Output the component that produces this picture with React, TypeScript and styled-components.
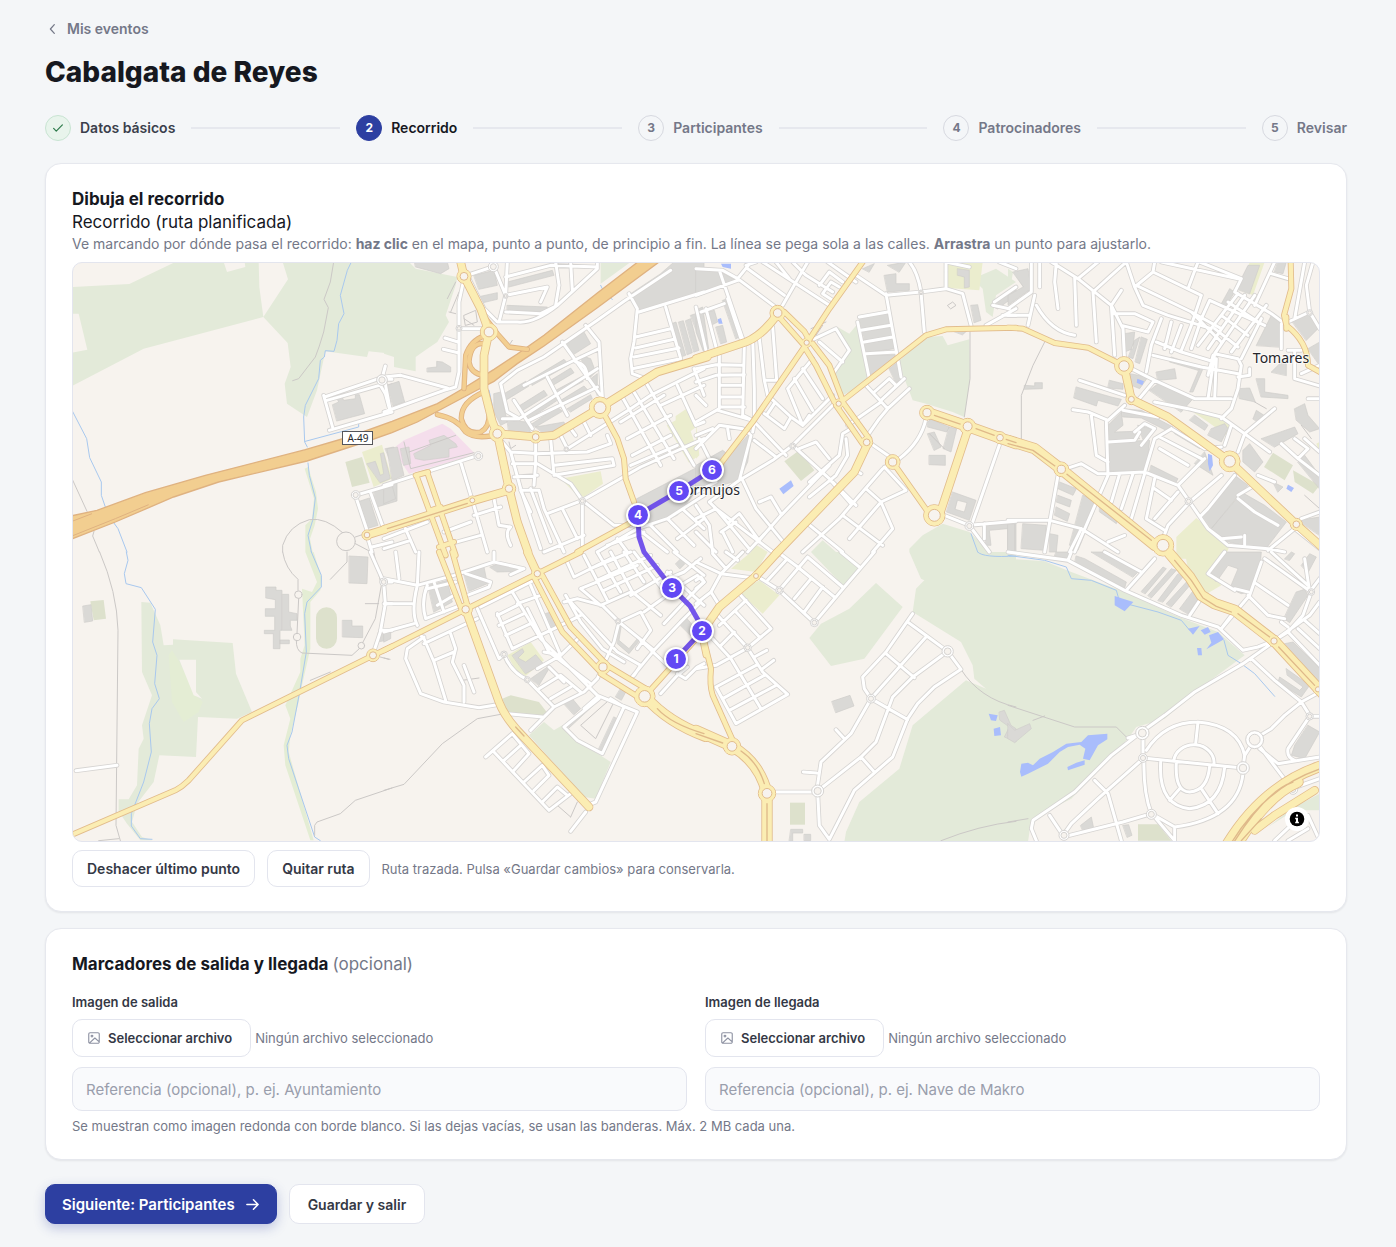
import React from "react";
import styled, { createGlobalStyle, css } from "styled-components";

const Global = createGlobalStyle`
  *, *::before, *::after { box-sizing: border-box; }
  body { margin: 0; background: #f4f6f8; color: #16181f; font-family: Inter, "Noto Sans", sans-serif; font-size: 16px; }
  button, input { font-family: inherit; }
  h1, h2, p { margin: 0; }
`;

/* ---------- Map data: each sheet is drawn at three times the screen scale ---------- */

type Kind = "green" | "meadow" | "park" | "pitch" | "pink" | "building" | "water" | "stream" | "track" | "street" | "ramp" | "avenue" | "slim" | "wide" | "median";
type Sheet = {
  x: number;
  y: number;
  paths: Partial<Record<Kind, string>>;
  hubs: [number, number, number][];
  rings: [number, number, number][];
};

const SHEETS: Sheet[] = [
  {
    x: 0, y: 0,
    paths: {
      green: "M0 75L172 66L310 0H455L465 30L520 15L518 0H560L562 75L574 165L648 52L632 0H960V275L890 268L885 285L760 268L735 385L705 465L645 425L638 365L656 315L647 243L574 165L215 260L0 372V272L46 263L20 155H0Z",
      meadow: "M698 620L708 615L732 690L738 740L728 790L714 830L722 870H700L700 790L720 770L726 710Z",
      park: "M870 570L930 548L945 600L960 650L905 675Z",
      pitch: "M820 600L870 585L893 662L840 675Z",
      building: "M782 428L800 420L795 410L810 405L815 415L850 410L850 398H862L878 455L795 477ZM885 605L910 598L925 640L935 635L925 575L935 572L955 650L925 662ZM940 560L965 555V620ZM905 685L975 660V717L915 735ZM862 718L892 708L918 790L885 800ZM945 370L960 365V385L948 388Z",
      stream: "M838 0L826 25L805 100L816 155L800 185L795 235L786 268L760 266L757 285L745 295L740 350L700 430L695 465L698 540L706 555M700 538L860 495V485M0 445L44 530L53 587L88 660V700L100 735M125 782L138 800L165 870M708 603L712 640L730 708L722 775L708 820L718 870",
      track: "M785 0L775 60L756 112L769 137L755 210L742 252L730 285L680 350L662 356M0 650L45 748M66 808L62 822L82 870M632 870V850Q650 790 712 773Q760 765 812 812M850 838A28 28 0 1 0 794 838A28 28 0 1 0 850 838M850 825L880 815M850 845L890 866",
      street: "M758 405L920 350M765 415L930 368M755 400L783 500M772 505L960 450M940 312L930 350M925 370L940 395L955 450M895 690L935 800M850 700L890 820M850 700L960 668M885 820L900 870M900 855L960 840M935 352H960",
      avenue: "M885 819L940 802",
    },
    hubs: [[885, 819, 15]],
    rings: [[930, 354, 16], [851, 699, 13]],
  },
  {
    x: 312, y: 0,
    paths: {
      green: "M0 0H75L95 20L220 45L215 70L185 160L195 180L160 240L130 260L95 285V328L30 315V285L0 275ZM650 0H740L650 65Z",
      pink: "M37 552L60 535L175 485L200 500L270 572L230 590L75 635L45 590Z",
      park: "M848 490L875 475V462L905 442L942 490L920 508L945 580L915 602ZM530 650L650 628L657 665L600 705L570 690Z",
      building: "M90 575L140 550L135 535L180 520L215 545L220 555L195 560V585L120 595L95 590ZM50 560L75 555L80 605L60 610ZM10 560L40 555L60 640L25 655ZM0 675L25 672L35 710L0 725ZM8 370L45 358L62 420L28 432ZM130 318L158 315V298L175 300L200 315V330H130ZM92 0H190L195 20L170 35L95 15ZM270 40L330 25L340 70L285 82ZM280 105L340 92V112L285 125ZM370 60L505 25L510 40L375 75ZM370 130L490 135V150L370 145ZM740 95L830 35L870 0H960V90L765 150ZM862 185L876 180L905 280L890 285ZM884 180L898 176L925 272L910 278ZM905 176L920 170L945 265L930 270ZM920 160L935 155L960 240V265ZM435 355L540 292L555 308L445 370ZM360 395L425 358L435 372L365 415ZM545 245L600 210L620 245L565 280ZM400 435L480 385L490 400L410 450ZM425 460L510 405L520 415L430 475ZM500 355L560 318L570 332L510 368ZM515 385L590 345L598 358L520 400ZM530 415L600 372L612 385L540 428ZM440 488L520 435L535 448L455 495ZM550 440L620 398L625 410L560 450ZM370 475L430 480L440 512H375ZM330 395L350 390L370 480L350 490L330 450ZM455 495L540 480L545 495L480 515ZM590 280L620 290L635 330L620 345L600 320ZM620 350L640 335V400ZM755 712L960 605V655L880 760L800 795L770 740Z",
      track: "M190 110L215 60M200 150L225 90M240 160L275 145L280 180L245 190ZM240 170L270 190M195 150L215 155M375 250L385 235M590 60L600 60M60 540L80 620L270 572M75 570L215 520M375 540L380 560L395 550",
      stream: "M650 70L655 80M675 105L685 112M315 385L325 430",
      street: "M240 50L225 120V200H300M225 200V330L215 375L180 385L0 450M50 340L190 378M0 345L50 340M183 228L222 240M178 262L222 272M240 43L325 15V0M330 15L365 100L345 180M370 0L365 100L490 75L470 120M255 50L300 140L340 180H400Q450 185 520 130L640 20V0M365 45L500 10L640 15M515 0L525 70L515 130M560 0L565 85M365 150L470 155L520 130M350 365L400 325L480 285L640 175L720 118L860 25M605 190L645 240L655 405M535 240L650 400M350 365L370 450L405 470L640 320M435 475L640 375M420 370L560 300L645 260M390 415L445 500M490 345L550 460M355 470H405M575 300Q610 305 610 350M735 95L760 140L750 240L740 290L745 335L785 350M765 150L960 90M845 135L890 290M755 225L860 200M755 258L870 232M750 285L885 258M745 320L890 290M355 540L380 570L470 575M455 530V600L450 670M380 570L410 680L470 860M385 605H460L560 665L595 715L690 790L740 790M390 645L460 640M410 685H465L480 740M500 530L510 640L690 610L685 590L510 610M455 575L610 570L680 545L670 520M530 520L550 560L740 440M595 717V850M490 755L595 715L770 615L960 530M560 500L575 520M600 480L620 520M715 405L830 610M750 390L870 590M785 360L930 610M740 440L800 400L960 320M710 480L840 400M730 530L860 460M745 580L860 520M740 610L880 550M880 370L935 490L960 480M930 320L960 400M830 430L960 370M0 830L130 780M60 790L95 870M230 600L265 715L310 870M0 670L283 580M330 710L345 790L380 795Q360 810 380 850M270 760L350 735M180 810L260 780M200 845L290 820M0 860L80 835M410 685L440 750M440 680L500 840M480 740L540 870M535 740L580 830M480 870L600 820M640 870L760 800L850 770L960 700M700 830L730 870M760 800L850 870M800 790L880 870M850 770L930 850M900 745L960 800M670 850L780 810M880 830L960 770M0 345L20 450",
      ramp: "M290 150L340 215L375 255L430 262M300 222Q260 235 245 280L240 380M300 245Q260 240 255 300Q260 335 300 340M160 458Q220 470 245 510Q270 530 320 522M300 390Q230 420 232 470Q245 520 290 510Q320 495 315 440",
      avenue: "M230 0L240 43L290 140L315 210L300 280V380L325 480L340 515L375 680L400 780L432 870M340 515L455 525L510 520L648 437L820 330L970 285M0 802L265 717L375 685",
      slim: "M650 437L700 530L720 590L725 650L750 720M580 870L735 785M97 640L185 880M130 632L215 880M95 640L132 630M140 745L170 735M165 855L210 840",
      median: "M10 800L250 724",
    },
    hubs: [[240, 43, 21], [315, 210, 26], [340, 515, 24], [455, 525, 18], [648, 437, 32], [375, 680, 20], [265, 715, 13]],
    rings: [[283, 582, 13], [225, 199, 9], [328, 14, 15], [595, 717, 10], [365, 102, 7], [547, 562, 7]],
  },
  {
    x: 624, y: 0,
    paths: {
      green: "M425 195L460 215L485 185L520 360L440 400L410 330L455 265ZM605 300L690 225L740 222L755 250L820 232L822 350L805 465L770 450L690 425L650 415L635 375ZM830 50L900 20L960 60L900 100L890 165L870 150L860 80ZM640 860L680 820L740 785L820 810L880 870H640ZM345 870L380 835L420 870Z",
      park: "M755 0H860L850 85L755 78ZM150 870L180 848L215 870ZM0 480L10 580L0 590Z",
      pitch: "M265 598L310 565L355 625L315 657Z",
      water: "M250 680L285 655L293 672L262 697ZM75 5H105V20L80 15ZM65 172L75 168L80 185H68Z",
      building: "M0 20L75 30L120 55L0 100ZM8 140L20 135L38 260L22 268L0 210V150ZM32 150L55 145L65 180L45 190ZM60 195L80 190L92 240L75 245ZM80 115L95 110L130 225L120 230ZM490 170L575 150L580 185L495 200ZM497 205L585 190L590 225L505 235ZM503 245L590 230L597 260L510 272ZM512 280L600 278L575 310L520 340ZM580 320L605 300L620 350L600 362ZM565 40L600 35V65L640 65V85L575 90ZM575 10L630 0L610 30ZM500 20L535 5L520 30ZM785 20L820 25V75L805 78V45L785 40ZM825 130L845 128L855 175L835 182ZM695 480L705 472L760 495L752 510L695 495ZM760 495L782 500L765 570L742 560ZM695 515L715 510L735 555L715 565ZM700 580H748V610L700 608ZM770 690L840 715L820 775L752 750ZM785 715L813 722L805 750L778 742ZM865 785L960 780V870H935V800L880 805L885 850H870ZM0 610L80 565L100 580L160 515H168L155 600L130 655L0 690ZM885 130L960 75V100L905 140ZM765 205L820 200L800 218Z",
      track: "M822 210V350L805 465M345 200L390 180M700 515L745 560M360 220L380 190M755 130L770 120L780 130L765 140Z",
      stream: "M825 815L845 870",
      street: "M0 20L80 25L125 50L245 140M125 50L165 0M70 25L140 230M0 100L125 55M155 20L265 100M150 10L180 0M260 130L300 60L335 0M200 0L400 130M240 0L280 50M290 0L330 40L410 90M370 70L400 30L440 60M380 95L405 60L430 75M380 95L410 115M395 0L480 60M0 135L30 265M15 150L85 125M95 110L135 230M30 140L60 255M70 280V440L0 480M145 250L140 460L170 475M0 320L60 308L140 310M0 360L60 340L145 338M70 370H140M70 405H140M70 435H145M65 445L170 475M170 230L175 380V480L170 510M165 520L130 655L40 720M190 230L205 355L215 400M230 195L242 355H205M175 480L270 580M215 400L285 465L265 500L205 455M235 425L215 455M285 465L320 490M175 535L240 585M290 550L400 650L465 725M290 550L420 420M290 550L230 595L130 655M345 235L420 200L460 265L415 330M370 240L440 300M275 380L350 290M275 380L320 490L340 460M295 350L350 445M320 320L380 410M320 490L410 400M465 500L440 515L430 580L340 660M450 530L455 580L420 640L340 705M400 610L255 760L185 840M310 560L360 540L400 590M490 165L575 150M485 180L520 350M570 95L615 345M495 205L585 190M505 240L590 225M510 275L600 270M480 40L570 100L675 90L685 210M640 0Q665 30 675 90L750 80L800 95L825 190M750 0V80M870 190L960 140M895 120L960 75M890 130L940 140M750 0L820 15M920 160H960M910 0L960 20M510 370L575 440L550 470L515 520M640 380L575 440M535 390L580 350L600 370M555 415L625 350M455 490L555 420M690 470Q675 540 610 590L560 620L430 770L320 870M525 545L590 590M565 615L630 685L555 720L590 800L530 870M440 760L560 850M510 680L555 720L460 830M335 785L440 870M410 660L480 730M480 625L495 635M745 760L820 790L960 778M820 790L880 870M910 550L830 780M865 785V830M40 720L60 740L230 870M0 730L40 790L50 870M0 770L60 740M140 655L180 740L270 850M190 720L225 705L255 755M0 560L70 490L140 500L160 515M0 520L50 500M10 530L40 590M95 500L100 530M0 690L60 660M60 740L160 860M100 780L130 755L185 830M80 810L110 870M0 810L60 870M0 400L30 430M225 795L155 870M75 810L120 780",
      avenue: "M0 290L150 240Q200 220 245 155M515 545L475 630L240 875M818 495L735 745",
      slim: "M252 168L320 245M265 150L325 208L340 235M500 0L400 140L335 240L170 480L70 610M325 255L360 310L415 420M350 245L400 310L440 415M420 430L500 545M440 420L520 530M435 420L690 220L750 202L960 197M590 600L710 770",
      wide: "M690 450L815 493L960 545",
      median: "M715 460L795 487M840 500L895 520M930 532L960 542",
    },
    hubs: [[245, 153, 23], [332, 242, 14], [428, 425, 14], [512, 541, 18], [590, 600, 22], [693, 452, 22], [815, 493, 24], [912, 527, 18], [715, 760, 32]],
    rings: [[290, 552, 9], [820, 792, 13], [675, 91, 7]],
  },
  {
    x: 936, y: 0,
    paths: {
      green: "M0 20L15 30L10 60L0 65Z",
      park: "M505 825L565 768L665 850L650 890H505ZM555 450L625 455L670 495L655 520L600 480ZM725 0H770L735 100L700 85ZM925 545L935 540V570Z",
      pitch: "M768 615L795 572L855 610L830 655ZM855 625L935 670L915 695L860 660Z",
      water: "M600 575L612 580L615 610L605 628L600 605ZM388 350L408 358L403 370L386 362ZM840 668L858 678L850 690L835 680Z",
      building: "M300 540L425 535L415 630L305 628ZM300 490L340 450L345 490L320 510L380 508L395 530L300 540ZM340 440L400 445L495 495L480 508L400 468L345 465ZM495 500L585 545L575 560L500 515ZM425 385L450 365L555 410L520 450ZM365 335L420 345L395 380L370 370ZM205 375L310 405L340 412L330 432L270 415L265 432L198 408ZM305 355L345 365V382L300 378ZM350 215L380 210L375 260L350 270ZM380 235L395 225L375 290L362 285ZM400 225L418 232L395 305L382 300ZM445 330L500 320L505 350L450 355ZM490 285L580 315L570 325L485 300ZM585 320L555 390L545 390L575 318ZM560 460L600 490L590 505L545 475ZM610 500L650 485L660 500L640 540L600 520ZM590 570L615 640L560 605ZM430 610L510 650L500 668L425 630ZM155 660L205 680L195 700L150 680ZM150 700L190 715L185 735L145 720ZM145 735L185 755L178 778L140 760ZM225 700L270 720L210 865L185 850ZM275 735L330 770L325 785L275 750ZM580 760L680 640L720 670L610 800ZM610 800L700 690L770 730L835 780L770 865L640 835ZM705 565L725 545L765 600L740 630L705 600ZM745 250L790 160L820 185V255ZM850 175L905 155L930 200L895 235ZM690 380L725 378L742 420L695 410ZM745 350H770V390L840 400V410L760 405ZM790 330L820 300H835V340ZM860 440L890 425L900 460L935 500L905 510L865 475ZM760 530L860 495L870 515L800 555ZM870 600L890 580L935 640V680ZM685 80L720 10H755L725 95ZM640 125L665 80L680 90L655 130ZM810 0H835L825 35L800 30ZM0 785L20 785V870H0ZM45 785L115 790L110 865L40 860ZM870 775L935 765V820ZM50 370L80 372V362H103V380L50 382ZM735 470L745 445L768 460L750 480ZM15 30L60 20L70 80L0 130V100L45 75ZM900 260L935 240V310ZM125 815L150 820L145 870H125ZM390 490L430 500L410 545ZM795 660L825 675L810 690Z",
      track: "M110 240L75 310L40 400V530M890 700L935 740M880 490L910 530M740 420L775 440",
      street: "M130 0L210 50L310 130L345 200L350 300M210 50L270 0M95 0V75M145 0L140 60L150 140M200 45L205 190M255 90L265 240M310 130L320 280M255 90L310 40L355 0M310 130L340 85M355 0L380 75L405 130L480 160L610 200M380 75L435 30L440 0M435 30L580 100M385 70L550 150L640 200M580 100L550 190M540 80L570 0M460 0L690 50M575 0L700 50L680 90L790 155L830 185M605 115L770 190M605 115L580 170L550 260M550 150L640 240M320 155H380L435 180L420 210L340 190M460 170L430 250L415 330M445 240L520 270L620 300M490 180L470 260M520 190L490 270M550 190L520 265M435 280L580 315L690 335M740 100L620 275L600 410M710 100L600 260M690 95L570 250M775 130L670 270M760 170L700 290M660 120L750 180M640 160L720 220M620 200L690 255M620 275L690 290L700 310L690 380L670 440L640 470M625 290L620 410M370 320L440 355L560 410H670M725 320V340L690 345M820 185V260M860 265V350L935 372M840 265H880M840 50L790 35M800 0L740 130M890 0L860 170M915 0L895 70L905 150L840 180M905 150L935 200M215 355L350 400M195 443L240 450L300 475L350 430M250 460L265 580L300 600M295 480L300 640L265 720L200 870M300 540L380 535L395 510M300 635L410 630L440 530L490 500M380 510L410 485L440 500L400 550M390 415L440 355M455 525L580 590M490 500L590 560L640 555M345 445L450 465M440 420L540 440L640 465L710 515L785 570M690 570L710 515L800 440M670 490L650 550M410 630L510 670L545 720L600 800L660 850L780 860L830 870M175 620L220 605L270 635H300M335 635L310 720M375 635L340 740M410 635L370 770M440 650L415 770L470 805M440 680L490 715M510 690L440 770M545 720L480 790L465 830M150 640L125 780L110 870M0 775H125L220 800L330 870M220 800L185 870M545 720L640 640M510 670L590 590M455 560L540 610M690 700L740 670M690 710L740 750L810 790M680 640L600 740L580 760M710 820V850M600 800L640 830L700 825M780 865L860 800L935 860M820 545L870 590L935 640M870 590L900 560L860 530M750 640L800 660M880 770L935 750M900 410H935M890 530L935 570M350 820L300 840M80 100L60 190M0 160H65M85 130Q130 210 200 220M0 140L70 90V0M880 335L935 310M600 340L615 280",
      avenue: "M348 312L370 412L480 465L665 598L865 787L945 858",
      slim: "M0 197L45 200L140 243L240 257L348 312M848 0L850 80L828 160L835 190Q900 240 900 310L945 335M835 165V200",
      wide: "M0 535L80 560L160 622L440 850",
      median: "M0 545L75 565L145 615M175 635L430 835",
    },
    hubs: [[348, 312, 28], [370, 412, 16], [665, 598, 31], [160, 622, 22], [865, 787, 18], [465, 850, 32]],
    rings: [[542, 718, 11], [905, 152, 9]],
  },
  {
    x: 0, y: 290,
    paths: {
      green: "M208 150L235 152L265 220L275 280L303 278V262L482 273L492 365L540 480L495 500L378 495L372 615L262 610L245 690L195 755L180 810L210 855L240 865H205L165 815L140 778V742H170L195 700L200 590L215 560L210 520L240 430L210 360Z",
      meadow: "M300 295L322 330L370 430L392 450L380 480L335 510L300 450L290 310ZM700 0H725L750 80L745 115L715 150V290L690 400L680 450L655 550L650 600L725 865H715L640 640L635 580L655 500L640 460L685 360V320L698 280L690 110L720 120L735 90Z",
      pitch: "M55 148L95 144L102 200L65 205ZM732 197a31 31 0 0 1 63 0v62a31 31 0 0 1 -63 0z",
      building: "M832 12L888 15L885 95L832 93ZM582 105H612V115H630V235H624V290H604V245H577V235H608V193H580V170H610V143L582 138ZM632 127H650V180L675 185V205H655V222L660 235H632ZM624 264H652V275H624ZM812 205H840V222H872V257L812 255ZM33 162L57 158L62 207L38 211ZM920 240L955 240L945 265L915 270Z",
      stream: "M163 0L168 25L157 65L162 95L208 107L250 172L242 270L255 310L248 395L262 440L240 470L232 515L238 600L215 690L178 785V822L205 860L240 862M718 0L748 70V105L705 150L698 185L703 300L683 420L660 540L645 580L650 620L728 855L745 866",
      track: "M83 0Q135 120 138 235L132 820L145 866M80 866L140 860M632 0Q640 50 678 82V115M680 140L675 245M673 265Q672 295 690 303L840 310L862 290M825 0V30L775 82M880 155H920M905 0L928 100L910 200L872 272M960 708L850 745L805 785L735 810L728 820V850M925 315L950 322M715 385L775 360M690 128A11 11 0 1 0 668 128A11 11 0 1 0 690 128M686 255A11 11 0 1 0 664 255A11 11 0 1 0 686 255M878 281A10 10 0 1 0 858 281A10 10 0 1 0 878 281",
      street: "M12 656L135 640M895 0L935 90L940 155L925 240L905 300M935 90H960M940 155H960M925 235H960",
      slim: "M0 848L310 715Q330 705 350 685L510 505L900 312L960 283",
    },
    hubs: [[903, 310, 19]],
    rings: [[935, 90, 12]],
  },
  {
    x: 312, y: 290,
    paths: {
      green: "M435 550L480 510L510 535L535 520L580 565L680 630L635 740L600 735Z",
      park: "M370 310L440 270L480 325L425 372L395 355Z",
      pitch: "M355 440L380 430L465 450L488 480L475 492L370 480Z",
      building: "M385 310L415 290L420 300L402 318L425 330L455 308L478 335L425 365ZM440 380L490 345L495 350L465 400ZM483 185L500 180L520 220L505 230ZM540 455L565 440L590 470L570 488ZM545 520L640 435L648 442L555 528ZM690 495L700 500L655 600L643 595ZM710 410L728 415L712 445L695 435ZM132 100L190 85L205 150L150 180ZM240 65L300 45L310 95L255 118ZM318 45L350 32L415 45V58L340 60ZM875 35L890 20L903 35L888 50ZM885 215L905 195L935 230L920 250ZM700 225L712 220L705 265L735 290L760 260L765 268L735 305L700 275ZM0 240H20V260L0 270Z",
      track: "M0 715L60 697L175 575L280 500L350 487M680 440L590 520L635 560L690 450M235 385L285 378M560 795L580 750M520 760L560 795M0 318L18 322",
      street: "M280 170L345 320L360 307M385 120L470 260L580 370L640 430L760 480M340 190L400 160M345 220L420 185M365 250L440 215M385 290L530 220L590 190M430 170L495 300L620 395M340 185L385 290M440 100L530 310M480 300L530 310L580 262M460 350L530 310M400 155L470 130M290 165L460 80M360 307Q380 360 430 383L510 465L600 420L640 380M440 535L510 465M465 410L530 370L590 420M500 440L560 405M495 345L540 390M370 485L475 495M35 0L45 80M105 0L100 100M0 80L100 100L210 70L330 30M100 100Q80 180 100 220M0 155H85M0 240L90 215M130 100Q110 150 125 200L230 160M150 90L180 180M160 160L210 130M130 110L215 90M330 0V30L420 50L380 68M245 65L320 90L315 105L250 130M120 255L70 290L65 320L110 425L180 450L285 467L340 458M120 260L150 330L185 445M200 245L215 290L205 330L240 400V450M150 325L210 300M240 340L270 420M105 245L120 260M120 275L280 200M640 380L690 270L705 210L655 160L580 140L540 150M545 130L590 210L655 290L720 330M560 150L700 300L770 340L750 370M590 110L650 160L740 120M705 210L770 180L800 235L760 290M705 210L810 295L740 380M770 265L850 340M600 60L680 20M545 20L570 75L600 60M600 10L670 145M640 0L710 120M680 0L745 120L830 190M720 0L780 90M750 0L850 130M590 110L760 40M620 50L740 0M640 85L800 10M660 115L820 40M740 130L860 60M780 180L850 130M840 215L920 130L960 90M810 295L890 210L950 150M850 60L960 160M830 90L900 60L950 20M890 100L940 70L960 90M870 0L960 70M830 425L880 370L910 345M880 365L905 380L940 345L960 335M645 440L540 525L580 565L655 605L720 465M760 480L635 750L610 760M680 440L720 465M600 470L640 435M605 780L560 838M305 615L385 545M330 600L495 775L560 725M385 545L435 605L390 655M360 625L410 580M420 690L475 640L495 670L450 715M475 750L520 705L550 730",
      avenue: "M430 0L460 65M248 180L345 450Q360 490 400 535L615 765",
      slim: "M0 295L245 172L460 65L590 0M165 0L230 165M205 0L250 160M450 75L535 240L645 355M475 70L560 225L665 335M660 335L785 410M650 365L770 440M785 430L870 335L950 245M950 240L965 310",
      wide: "M785 435Q850 510 965 553",
      median: "M820 470Q860 515 960 545M395 525L420 552",
    },
    hubs: [[245, 172, 20], [460, 65, 17], [657, 345, 22], [782, 433, 31]],
    rings: [[360, 307, 10], [430, 383, 9], [702, 208, 8]],
  },
  {
    x: 624, y: 290,
    paths: {
      green: "M345 0H440L490 50L445 105ZM540 93L620 165L505 320L405 342L340 258L375 215L460 170ZM640 0H960V870H445L450 840L490 750L610 650L650 520L810 385L870 410L835 380L830 340L795 270L650 180L660 110L685 85L675 80Z",
      park: "M105 50L165 0H215L180 60ZM128 120L190 85L250 130L200 185Z",
      pitch: "M282 752H327V818H282Z",
      building: "M408 448L462 430L474 462L420 482ZM285 832H320V843H290V868H280ZM325 847H344V866H325ZM910 480L925 475L945 520L960 530V570L925 555L940 525L912 505Z",
      water: "M878 485L905 490L900 507L885 505ZM893 530L912 525L915 550L895 552Z",
      stream: "M845 0Q860 18 960 12",
      track: "M795 352Q850 440 960 465M735 866Q850 820 960 808",
      street: "M0 30L75 65L175 78M75 65L140 0M50 5L90 50M90 0L125 25M75 65L45 120L0 155M45 120L70 160M0 85L15 75L25 90L0 110M195 80L250 115L355 212L445 105L535 0M270 25L215 85M245 0L305 45L415 135M335 15L250 115M335 15L440 105M435 0L490 45M345 80L295 140M380 105L325 180M130 125L225 230L155 288L60 340L0 350M120 180L190 255M150 145L70 220M50 260L105 320L195 470M65 190L155 288M115 240L75 280M155 288L200 360L275 427L120 515L60 405L180 340M80 440L205 370M100 475L240 400M175 315L212 295M200 350L233 325M240 720H365L370 820L400 862L475 715L590 615L635 500L665 455L715 405L795 352L755 298L635 210M650 185L570 300L500 375L505 410L525 440L465 545L375 630L362 717M690 255L525 440M755 298L650 375L590 435L540 570L495 615L365 717M570 305L655 377M525 440L635 503M495 615L535 660M420 533L445 560M322 660L362 663",
      avenue: "M245 0L180 72L70 165L18 240",
      slim: "M18 240L45 350Q40 400 50 430L108 560",
      wide: "M0 535L108 583Q190 630 213 724V870",
      median: "M0 545L80 573M135 597Q185 630 205 695M213 755V870",
    },
    hubs: [[180, 72, 13], [108, 583, 26], [213, 724, 26]],
    rings: [[155, 287, 11], [250, 115, 11], [355, 212, 12], [755, 298, 17], [525, 440, 13], [365, 717, 18]],
  },
  {
    x: 936, y: 290,
    paths: {
      green: "M0 20L110 28L190 60L350 120L500 190L630 240L710 310L560 420L470 500L385 525L360 560L190 740L70 800L60 870H0ZM780 825L850 770L935 725V775L860 775Z",
      park: "M530 0H650L600 60L640 100L580 135L545 75Z",
      pitch: "M390 817H450L490 866H390Z",
      water: "M320 132L345 140L376 150L350 178L320 160ZM540 230L575 222L555 248ZM578 235L600 225L608 240L590 248ZM603 250L630 240L648 262L630 272L595 292L610 272ZM567 288H580L582 310H570ZM40 635L60 632L75 640L95 620L135 600L175 575L220 570L240 550L298 545V562L270 580L245 625L225 620L232 590L215 578L180 585L155 600L120 635L60 665L40 674L36 660ZM178 645L205 632L230 625V638L180 655Z",
      stream: "M0 10L110 25L175 45L190 80L250 85L325 115L335 150L450 180L520 205L545 235M648 265L660 310L700 335L740 365L800 433",
      building: "M205 12L230 20L355 90L350 108L200 35ZM250 0H290L390 60L375 75ZM145 0H185L180 20L140 12ZM400 118L465 45L475 50L412 125ZM420 130L490 50L505 55L430 138ZM450 145L510 65L525 75L465 150ZM475 155L540 85L550 95L490 165ZM515 170L560 110L578 130L540 185ZM650 0H760L755 60L725 120L700 125L665 110L690 50L660 40L625 90L605 70ZM865 120L890 112L900 130L845 212L828 200ZM830 275L855 270L935 350V395ZM835 350L905 400L880 435L810 390L815 375L875 415L885 405L838 370ZM900 520L935 540L890 620L850 610L860 580ZM218 820L250 795L257 828L225 836ZM345 820L362 818L372 850L358 856ZM0 515L20 535L65 515L70 530L20 572L0 560ZM880 40L905 5L925 15L900 62ZM830 20L850 0L860 5L845 25Z",
      track: "M0 460L200 525H325L360 560M75 505L110 492M0 810L60 800",
      street: "M0 0L180 25L350 115L520 190L630 225L705 295L750 285L800 265M180 25L190 0M355 115L440 20M400 60L290 0M545 190L575 145M640 230L670 190M790 275L705 335L560 420L470 490L400 540M730 320L800 385L880 450L905 490M400 540L310 610L200 720L75 805L70 830L85 866M360 558L400 545M405 620L270 740L190 815L165 850M405 560V618M405 618L500 628L705 648M430 785Q405 720 408 618M415 595Q470 510 570 510Q690 520 710 610L705 648M497 628A60 54 0 0 1 618 638M505 630Q500 720 545 720Q600 715 605 640M458 630Q450 760 545 770Q640 760 650 645M705 665Q690 800 500 825L430 785M570 510L563 575M430 785L345 810L165 855M485 745L515 710M580 710L630 785M260 685L300 725L340 866M125 790L165 850M440 795L500 866V825M740 563L710 610M740 563L855 715M865 705L935 680M755 590L810 635L935 615M740 560L790 530L830 490L880 450L935 420M905 493L840 590Q835 615 860 625M890 20L905 120L935 80M770 20L910 120L885 190L840 240L800 265M790 0L900 100M650 0L600 65L680 115M720 120L680 110M760 30L725 130L640 230M720 130L780 190L830 200M745 95L840 160M840 240L935 340M890 205L935 245M870 230L935 290M905 493H935M820 210L840 225M800 265L905 190L935 150M800 866L870 800L900 790L935 866M840 866L900 830",
      avenue: "M740 835L800 790L920 715",
      wide: "M485 5L545 75L580 130L620 155L680 175L800 268L945 425M650 890Q760 700 945 640M680 890Q775 730 870 690",
      median: "M500 25L550 85L585 138L625 163L670 180M690 185L785 255M812 285L920 400M660 890Q765 705 945 648M672 880Q770 720 855 690M700 866L760 800",
    },
    hubs: [[798, 267, 17], [930, 412, 14]],
    rings: [[403, 543, 20], [405, 618, 13], [705, 648, 19], [740, 563, 27], [430, 787, 15], [168, 850, 15], [855, 713, 14], [905, 493, 11], [910, 120, 10]],
  },
];

type Ink = { kind: Kind; fill?: string; stroke?: string; width?: number };
const LAYERS: Ink[] = [
  { kind: "green", fill: "#e3ead9" },
  { kind: "meadow", fill: "#e4edd4" },
  { kind: "park", fill: "#ebedce" },
  { kind: "pitch", fill: "#dde1cc" },
  { kind: "pink", fill: "#f5deec" },
  { kind: "building", fill: "#dad9d6", stroke: "#cfcdca", width: 2 },
  { kind: "stream", stroke: "#a8c8ee", width: 3 },
  { kind: "water", fill: "#a9bdfc" },
  { kind: "track", stroke: "#cbc8c6", width: 3 },
  { kind: "street", stroke: "#d6d4d2", width: 14 },
  { kind: "street", stroke: "#ffffff", width: 9 },
];
const AVENUES: Ink[] = [
  { kind: "ramp", stroke: "#dfb281", width: 16 },
  { kind: "wide", stroke: "#e2bc8c", width: 34 },
  { kind: "avenue", stroke: "#e2bc8c", width: 26 },
  { kind: "slim", stroke: "#e2bc8c", width: 18 },
];
const AVENUE_FILLS: Ink[] = [
  { kind: "ramp", stroke: "#f3cf91", width: 11 },
  { kind: "wide", stroke: "#fbedb3", width: 29 },
  { kind: "avenue", stroke: "#fbedb3", width: 21 },
  { kind: "slim", stroke: "#fbedb3", width: 13 },
  { kind: "median", stroke: "#dfb98a", width: 4 },
];

const MOTORWAY =
  "M-9 763L75 745L220 692L400 640L700 563L830 525L960 478L1096 425L1176 378L1266 322L1336 276L1416 220L1576 93L1704 -5H1768L1576 137L1416 252L1336 305L1266 358L1216 384L1036 480L960 512L880 540L705 597L440 660L305 705L130 780L-9 834Z";

function Layer({ ink }: { ink: Ink }) {
  return (
    <>
      {SHEETS.map((s) =>
        s.paths[ink.kind] ? (
          <path
            key={`${s.x}-${s.y}`}
            d={s.paths[ink.kind]}
            transform={`translate(${s.x} ${s.y}) scale(${1 / 3})`}
            fill={ink.fill ?? "none"}
            fillRule="evenodd"
            stroke={ink.stroke ?? "none"}
            strokeWidth={ink.width}
            strokeLinejoin="round"
            strokeLinecap="round"
          />
        ) : null
      )}
    </>
  );
}

function Circles({ set, fill, stroke, inner }: { set: "hubs" | "rings"; fill: string; stroke: string; inner: number }) {
  return (
    <>
      {SHEETS.map((s) => (
        <g key={`${s.x}-${s.y}`} transform={`translate(${s.x} ${s.y}) scale(${1 / 3})`} stroke={stroke} strokeWidth={3}>
          {s[set].map(([cx, cy, r]) => (
            <g key={`${cx}-${cy}`}>
              <circle cx={cx} cy={cy} r={r} fill={fill} />
              <circle cx={cx} cy={cy} r={r * inner} fill="#f7f3ee" />
            </g>
          ))}
        </g>
      ))}
    </>
  );
}

const ROUTE = "M604 397L630 369L626 358L618 344L600 326L572 290L567 275L566 253L607 229L640 208";
const STOPS: [number, number][] = [[604, 397], [630, 369], [600, 326], [566, 253], [607, 229], [640, 208]];

const MapFrame = styled.div`
  position: relative;
  height: 580px;
  margin-top: 8px;
  overflow: hidden;
  border: 1px solid #e3e5ee;
  border-radius: 10px;
  background: #f7f3ee;
`;
const MapCanvas = styled.svg`
  display: block;
  width: 100%;
  height: 578px;
`;
const Stop = styled.button<{ $x: number; $y: number }>`
  position: absolute;
  left: calc(50% + ${(p) => p.$x - 624}px);
  top: ${(p) => p.$y - 1}px;
  width: 24px;
  height: 24px;
  margin: -12px 0 0 -12px;
  padding: 0;
  border: 2px solid #fff;
  border-radius: 50%;
  background: #6248f4;
  color: #fff;
  font-size: 12px;
  line-height: 20px;
  font-weight: 700;
  text-align: center;
  box-shadow: 0 1px 4px rgba(0, 0, 0, 0.4);
  cursor: grab;
`;
const InfoButton = styled.button`
  position: absolute;
  right: 10px;
  bottom: 10px;
  display: grid;
  place-items: center;
  width: 24px;
  height: 24px;
  padding: 0;
  border: 0;
  border-radius: 50%;
  background: #fff;
`;

function RouteMap() {
  return (
    <MapFrame>
      <MapCanvas viewBox="1 1 1246 578" preserveAspectRatio="xMidYMid slice" role="img" aria-label="Mapa del recorrido">
        {LAYERS.map((ink, i) => <Layer key={i} ink={ink} />)}
        <path d="M322 323H372V420L390 440L365 430Z" transform="translate(0 290) scale(0.3333)" fill="#f7f3ee" />
        <Circles set="rings" fill="#ffffff" stroke="#d6d4d2" inner={0.6} />
        <path d={MOTORWAY} transform="scale(0.33333)" fill="#f2ce90" stroke="#dfb281" strokeWidth={4} />
        <path d="M0 822L130 770L230 728M0 778L60 755" transform="scale(0.33333)" fill="none" stroke="#dfb281" strokeWidth={3} />
        {AVENUES.map((ink, i) => <Layer key={i} ink={ink} />)}
        <Circles set="hubs" fill="#fbedb3" stroke="#e2bc8c" inner={0.55} />
        {AVENUE_FILLS.map((ink, i) => <Layer key={i} ink={ink} />)}
        {SHEETS.map((s) => (
          <g key={`${s.x}-${s.y}`} transform={`translate(${s.x} ${s.y}) scale(${1 / 3})`}>
            {s.hubs.map(([cx, cy, r]) => (
              <g key={`${cx}-${cy}`}>
                <circle cx={cx} cy={cy} r={r - 1} fill="#fbedb3" />
                <circle cx={cx} cy={cy} r={r * 0.56} fill="#f7f3ee" stroke="#e2bc8c" strokeWidth={3} />
              </g>
            ))}
          </g>
        ))}
        <rect x="270.5" y="169.5" width="30" height="13" fill="#fff" stroke="#55555a" />
        <g fontFamily='"Noto Sans", sans-serif' fill="#26262b" textAnchor="middle">
          <text x="286" y="180" fontSize="10">A-49</text>
          <g fontSize="14" stroke="#fff" strokeWidth="2" strokeOpacity="0.7" paintOrder="stroke">
            <text x="1209" y="101">Tomares</text>
            <text x="636" y="233">Bormujos</text>
          </g>
        </g>
        <path d={ROUTE} fill="none" stroke="#6848ea" strokeOpacity="0.92" strokeWidth={5} strokeLinejoin="round" />
      </MapCanvas>
      {STOPS.map(([x, y], i) => (
        <Stop key={i} type="button" $x={x} $y={y}>{i + 1}</Stop>
      ))}
      <InfoButton type="button" aria-label="Información del mapa">
        <svg width="16" height="16" viewBox="0 0 16 16" aria-hidden="true">
          <circle cx="8" cy="8" r="7.3" fill="#000" />
          <path d="M7 3.5h2v2H7zM6.2 6.8H9v4h.9v1.4H6.2v-1.4H7V8.2h-.8z" fill="#fff" />
        </svg>
      </InfoButton>
    </MapFrame>
  );
}

/* ---------- Page ---------- */

const Page = styled.main`
  padding: 20px 49px 23px 45px;
`;
const BackLink = styled.a`
  display: inline-flex;
  align-items: center;
  gap: 7px;
  padding-left: 1px;
  color: #747888;
  font-size: 14px;
  line-height: 18px;
  font-weight: 600;
  text-decoration: none;
`;
const Title = styled.h1`
  margin-top: 12px;
  font-size: 28px;
  line-height: 40px;
  font-weight: 800;
`;
const Steps = styled.ol`
  display: flex;
  align-items: center;
  gap: 16px;
  margin: 23px 0 22px;
  padding: 0;
  list-style: none;
`;
type StepState = "done" | "current" | "todo";
const Step = styled.li<{ $state: StepState }>`
  display: flex;
  flex: none;
  align-items: center;
  gap: 9px;
  color: ${(p) => ({ done: "#3b3f4c", current: "#16181f", todo: "#747888" })[p.$state]};
  font-size: 14px;
  line-height: 20px;
  font-weight: 600;
`;
const Rule = styled.li`
  flex: 1;
  height: 2px;
  background: #e6e8ee;
`;
const Badge = styled.span<{ $state: StepState }>`
  display: grid;
  place-items: center;
  width: 26px;
  height: 26px;
  border: 1px solid #d7d9e0;
  border-radius: 50%;
  font-size: 12px;
  line-height: 16px;
  font-weight: 700;
  ${(p) => p.$state === "done" && css`background: #e8f4ec; border-color: #c8e4d2; color: #2d7a4b;`}
  ${(p) => p.$state === "current" && css`background: #2d3fa1; border-color: #2d3fa1; color: #fff;`}
`;
const Card = styled.section`
  padding: 24px 26px;
  border: 1px solid #e6e8ee;
  border-radius: 16px;
  background: #fff;
  box-shadow: 0 1px 2px rgba(20, 24, 40, 0.08);
  & + & { margin-top: 16px; }
`;
const Heading = styled.h2`
  font-size: 17px;
  line-height: 22px;
  font-weight: 700;
`;
const Optional = styled.span`
  color: #747888;
  font-weight: 400;
`;
const Lead = styled.p`
  font-size: 17px;
  line-height: 24px;
`;
const Hint = styled.p`
  color: #747888;
  font-size: 14px;
  line-height: 20px;
`;
const Note = styled.span`
  color: #747888;
  font-size: 13px;
  line-height: 18px;
`;
const FootNote = styled.p`
  margin-top: 6px;
  color: #747888;
  font-size: 13px;
  line-height: 18px;
`;
const Row = styled.div`
  display: flex;
  align-items: center;
  gap: 12px;
`;
const MapTools = styled(Row)`
  margin-top: 8px;
`;
const control = css`
  display: inline-flex;
  align-items: center;
  border: 1px solid #e3e5ee;
  border-radius: 10px;
  background: #fff;
  color: #343845;
  font-weight: 600;
  cursor: pointer;
`;
const SmallButton = styled.button`
  ${control}
  height: 37px;
  padding: 0 14px;
  font-size: 14px;
`;
const Fields = styled.div`
  display: grid;
  grid-template-columns: 1fr 1fr;
  gap: 18px;
  margin-top: 18px;
`;
const Field = styled.div`
  display: flex;
  flex-direction: column;
`;
const FieldLabel = styled.label`
  font-size: 13px;
  line-height: 18px;
  font-weight: 600;
  color: #343845;
`;
const FileRow = styled.div`
  display: flex;
  align-items: center;
  gap: 4px;
  margin: 8px 0 10px;
`;
const FileInput = styled.input`
  position: absolute;
  width: 1px;
  height: 1px;
  overflow: hidden;
  opacity: 0;
`;
const FileButton = styled.label`
  ${control}
  gap: 7px;
  height: 38px;
  padding: 0 18px 0 14px;
  font-size: 13px;
  svg { color: #8f93a3; }
`;
const TextInput = styled.input`
  width: 100%;
  height: 44px;
  padding: 0 13px;
  border: 1px solid #e3e5ee;
  border-radius: 10px;
  background: #f9fafc;
  font-size: 15px;
  &::placeholder { color: #9a9eac; opacity: 1; }
`;
const Actions = styled(Row)`
  margin-top: 24px;
`;
const ActionButton = styled.button<{ $primary?: boolean }>`
  ${control}
  gap: 10px;
  height: 40px;
  padding: 0 18px;
  font-size: 14px;
  ${(p) => p.$primary && css`
    padding: 0 16px;
    border-color: #2d3fa1;
    background: #2d3fa1;
    color: #fff;
    font-size: 15px;
    box-shadow: 0 4px 12px rgba(45, 63, 161, 0.28);
  `}
`;

const Glyph = ({ size, d, width = 1.6 }: { size: number; d: string; width?: number }) => (
  <svg width={size} height={size} viewBox="0 0 16 16" fill="none" stroke="currentColor" strokeWidth={width} strokeLinecap="round" strokeLinejoin="round" aria-hidden="true">
    <path d={d} />
  </svg>
);

const STEPS: [string, StepState][] = [
  ["Datos básicos", "done"],
  ["Recorrido", "current"],
  ["Participantes", "todo"],
  ["Patrocinadores", "todo"],
  ["Revisar", "todo"],
];

function MarkerField({ id, label, example }: { id: string; label: string; example: string }) {
  return (
    <Field>
      <FieldLabel htmlFor={`${id}-file`}>{label}</FieldLabel>
      <FileRow>
        <FileInput id={`${id}-file`} type="file" accept="image/*" />
        <FileButton htmlFor={`${id}-file`}>
          <Glyph size={14} width={1.3} d="M3.5 2h9A1.5 1.5 0 0 1 14 3.500v9a1.500 1.500 0 0 1-1.500 1.500h-9A1.500 1.500 0 0 1 2 12.500v-9A1.500 1.500 0 0 1 3.500 2zM6.700 5.800a1 1 0 1 1-2 0a1 1 0 0 1 2 0M3 13.500l6-5.500l5 4.500" />
          Seleccionar archivo
        </FileButton>
        <Note>Ningún archivo seleccionado</Note>
      </FileRow>
      <TextInput type="text" aria-label={`Referencia: ${label}`} placeholder={`Referencia (opcional), p. ej. ${example}`} />
    </Field>
  );
}

export default function App() {
  return (
    <>
      <Global />
      <Page>
        <BackLink href="#eventos">
          <Glyph size={14} d="M9.500 3L5 8l4.500 5" width={1.4} />
          Mis eventos
        </BackLink>
        <Title>Cabalgata de Reyes</Title>
        <Steps>
          {STEPS.map(([name, state], i) => (
            <React.Fragment key={name}>
              {i > 0 && <Rule aria-hidden="true" />}
              <Step $state={state} aria-current={state === "current" ? "step" : undefined}>
                <Badge $state={state}>{state === "done" ? <Glyph size={14} width={1.4} d="M3 8.500l3 3l7-7" /> : i + 1}</Badge>
                {name}
              </Step>
            </React.Fragment>
          ))}
        </Steps>
        <Card>
          <Heading>Dibuja el recorrido</Heading>
          <Lead>Recorrido (ruta planificada)</Lead>
          <Hint>
            Ve marcando por dónde pasa el recorrido: <b>haz clic</b> en el mapa, punto a punto, de principio a fin. La línea se pega sola a las calles. <b>Arrastra</b> un punto para ajustarlo.
          </Hint>
          <RouteMap />
          <MapTools>
            <SmallButton type="button">Deshacer último punto</SmallButton>
            <SmallButton type="button">Quitar ruta</SmallButton>
            <Note>Ruta trazada. Pulsa «Guardar cambios» para conservarla.</Note>
          </MapTools>
        </Card>
        <Card>
          <Heading>Marcadores de salida y llegada <Optional>(opcional)</Optional></Heading>
          <Fields>
            <MarkerField id="salida" label="Imagen de salida" example="Ayuntamiento" />
            <MarkerField id="llegada" label="Imagen de llegada" example="Nave de Makro" />
          </Fields>
          <FootNote>Se muestran como imagen redonda con borde blanco. Si las dejas vacías, se usan las banderas. Máx. 2 MB cada una.</FootNote>
        </Card>
        <Actions>
          <ActionButton type="button" $primary>
            Siguiente: Participantes
            <Glyph size={15} d="M2 8h12M9 3l5 5l-5 5" />
          </ActionButton>
          <ActionButton type="button">Guardar y salir</ActionButton>
        </Actions>
      </Page>
    </>
  );
}
